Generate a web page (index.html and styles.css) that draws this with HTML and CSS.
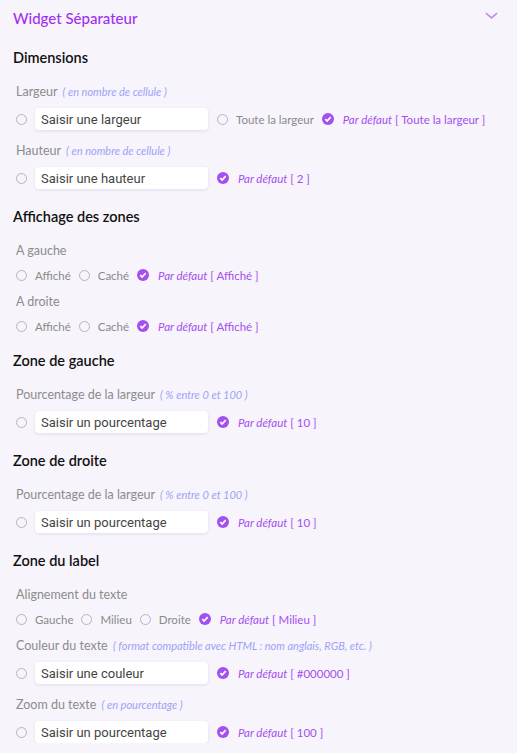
FILE: index.html
```html
<!doctype html>
<html lang="fr">
<head>
	<meta charset="utf-8">
	<meta name="viewport" content="width=device-width, initial-scale=1.0">
	<title>Widget Séparateur</title>
	<link rel="stylesheet" href="styles.css">
</head>
<body>
	<div class="panel">
		<div class="panel-head">
			<h2 class="panel-title">Widget Séparateur</h2>
			<svg class="chevron" viewBox="0 0 14 8"><path d="M1 1l6 5 6-5"></path></svg>
		</div>

		<h3 class="section">Dimensions</h3>

		<p class="label">Largeur <em class="hint">( en nombre de cellule )</em></p>
		<div class="row">
			<span class="radio"></span>
			<input class="field" type="text" placeholder="Saisir une largeur">
			<span class="radio"></span><span class="opt">Toute la largeur</span>
			<span class="check"><svg viewBox="0 0 12 12"><path d="M3.3 6.2l1.8 1.8 3.6-3.8"></path></svg></span>
			<span class="default"><em>Par défaut</em> [ Toute la largeur ]</span>
		</div>

		<p class="label">Hauteur <em class="hint">( en nombre de cellule )</em></p>
		<div class="row">
			<span class="radio"></span>
			<input class="field" type="text" placeholder="Saisir une hauteur">
			<span class="check"><svg viewBox="0 0 12 12"><path d="M3.3 6.2l1.8 1.8 3.6-3.8"></path></svg></span>
			<span class="default"><em>Par défaut</em> [ 2 ]</span>
		</div>

		<h3 class="section">Affichage des zones</h3>

		<p class="label">A gauche</p>
		<div class="row row-opts">
			<span class="radio"></span><span class="opt">Affiché</span>
			<span class="radio"></span><span class="opt">Caché</span>
			<span class="check"><svg viewBox="0 0 12 12"><path d="M3.3 6.2l1.8 1.8 3.6-3.8"></path></svg></span>
			<span class="default"><em>Par défaut</em> [ Affiché ]</span>
		</div>

		<p class="label">A droite</p>
		<div class="row row-opts">
			<span class="radio"></span><span class="opt">Affiché</span>
			<span class="radio"></span><span class="opt">Caché</span>
			<span class="check"><svg viewBox="0 0 12 12"><path d="M3.3 6.2l1.8 1.8 3.6-3.8"></path></svg></span>
			<span class="default"><em>Par défaut</em> [ Affiché ]</span>
		</div>

		<h3 class="section">Zone de gauche</h3>

		<p class="label">Pourcentage de la largeur <em class="hint">( % entre 0 et 100 )</em></p>
		<div class="row">
			<span class="radio"></span>
			<input class="field" type="text" placeholder="Saisir un pourcentage">
			<span class="check"><svg viewBox="0 0 12 12"><path d="M3.3 6.2l1.8 1.8 3.6-3.8"></path></svg></span>
			<span class="default"><em>Par défaut</em> [ 10 ]</span>
		</div>

		<h3 class="section">Zone de droite</h3>

		<p class="label">Pourcentage de la largeur <em class="hint">( % entre 0 et 100 )</em></p>
		<div class="row">
			<span class="radio"></span>
			<input class="field" type="text" placeholder="Saisir un pourcentage">
			<span class="check"><svg viewBox="0 0 12 12"><path d="M3.3 6.2l1.8 1.8 3.6-3.8"></path></svg></span>
			<span class="default"><em>Par défaut</em> [ 10 ]</span>
		</div>

		<h3 class="section">Zone du label</h3>

		<p class="label">Alignement du texte</p>
		<div class="row row-opts">
			<span class="radio"></span><span class="opt">Gauche</span>
			<span class="radio"></span><span class="opt">Milieu</span>
			<span class="radio"></span><span class="opt">Droite</span>
			<span class="check"><svg viewBox="0 0 12 12"><path d="M3.3 6.2l1.8 1.8 3.6-3.8"></path></svg></span>
			<span class="default"><em>Par défaut</em> [ Milieu ]</span>
		</div>

		<p class="label">Couleur du texte <em class="hint">( format compatible avec HTML : nom anglais, RGB, etc. )</em></p>
		<div class="row">
			<span class="radio"></span>
			<input class="field" type="text" placeholder="Saisir une couleur">
			<span class="check"><svg viewBox="0 0 12 12"><path d="M3.3 6.2l1.8 1.8 3.6-3.8"></path></svg></span>
			<span class="default"><em>Par défaut</em> [ #000000 ]</span>
		</div>

		<p class="label">Zoom du texte <em class="hint">( en pourcentage )</em></p>
		<div class="row">
			<span class="radio"></span>
			<input class="field" type="text" placeholder="Saisir un pourcentage">
			<span class="check"><svg viewBox="0 0 12 12"><path d="M3.3 6.2l1.8 1.8 3.6-3.8"></path></svg></span>
			<span class="default"><em>Par défaut</em> [ 100 ]</span>
		</div>
	</div>
</body>
</html>
```

FILE: styles.css
```css
html, body {
	margin: 0;
	background: #f7f4fb;
}

body {
	font-family: "Lato", "Open Sans", sans-serif;
}

.panel {
	padding: 0 13px;
}

.panel-head {
	display: flex;
	align-items: center;
	justify-content: space-between;
	height: 35px;
}

.panel-title {
	margin: 0;
	font-size: 15px;
	font-weight: 500;
	color: #a22ef0;
}

.chevron {
	width: 13px;
	height: 8px;
	margin-right: 6px;
	margin-top: -4px;
	fill: none;
	stroke: #c38af7;
	stroke-width: 1.8;
}

/* headings */
.section {
	margin: 18px 0 0 0;
	font-size: 14.5px;
	font-weight: 600;
	color: #111;
	line-height: 20px;
}

.panel-head + .section {
	margin-top: 13px;
}

.row-opts + .section {
	margin-top: 15px;
}

/* field labels */
.label {
	margin: 13px 0 0 3px;
	font-size: 12.5px;
	color: #8c8c8c;
	line-height: 16px;
}

.section + .label {
	margin-top: 16px;
}

.row-opts + .label {
	margin-top: 9px;
}

.hint {
	font-size: 11px;
	color: #9ca3f7;
	margin-left: 2px;
}

.row {
	display: flex;
	align-items: center;
	height: 22px;
	margin: 8px 0 0 3px;
	font-size: 11.5px;
}

.row-opts {
	margin-top: 6px;
	height: 20px;
}

.radio {
	flex: none;
	width: 9px;
	height: 9px;
	border: 1.5px solid #b3b6ba;
	border-radius: 50%;
	margin-right: 8px;
}

.field {
	box-sizing: border-box;
	width: 173px;
	height: 22px;
	margin-right: 9px;
	padding: 0 6px;
	border: none;
	border-radius: 4px;
	background: #fff;
	box-shadow: 0 1px 3px rgba(80, 60, 120, 0.12);
	font-family: "Roboto", "Liberation Sans", sans-serif;
	font-size: 13px;
	outline: none;
}

.field::placeholder {
	color: #444;
}

.opt {
	color: #8a8a8a;
	margin-right: 8px;
}

.check {
	flex: none;
	display: flex;
	width: 12px;
	height: 12px;
	border-radius: 50%;
	background: #a44ff0;
	margin-right: 9px;
}

.check svg {
	width: 12px;
	height: 12px;
	fill: none;
	stroke: #fff;
	stroke-width: 1.8;
}

.default {
	color: #a44ff0;
}
```
